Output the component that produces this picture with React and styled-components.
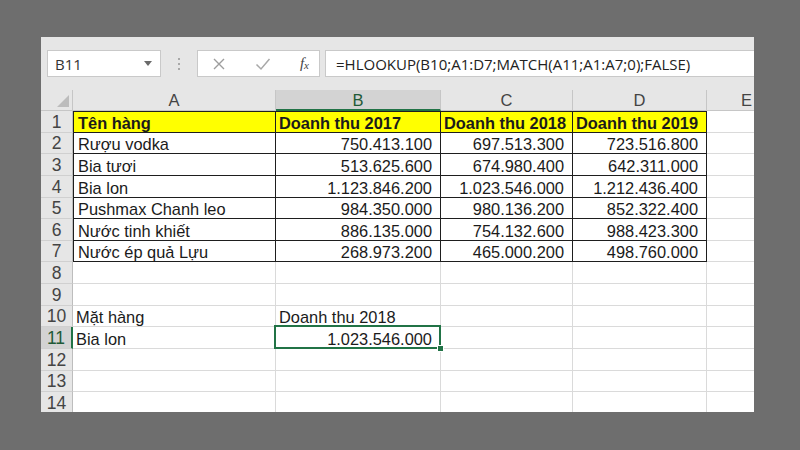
import React from "react";
import styled, { createGlobalStyle } from "styled-components";

const GlobalStyle = createGlobalStyle`
    html, body {
        margin: 0;
        padding: 0;
    }
    body {
        background: #6e6e6e;
        font-family: "Liberation Sans", Arial, sans-serif;
    }
`;

const GREEN = "#217346";

const Stage = styled.div`
    width: 800px;
    height: 450px;
    box-sizing: border-box;
    padding: 37px 46px 38px 41px;
    overflow: hidden;
`;

const Window = styled.div`
    width: 713px;
    height: 375px;
    background: #e6e6e6;
    display: flex;
    flex-direction: column;
    overflow: hidden;
`;

const FormulaBar = styled.div`
    display: flex;
    align-items: stretch;
    height: 27px;
    margin: 13px 0 13px 6px;
    flex-shrink: 0;
`;

const NameBox = styled.div`
    width: 114px;
    box-sizing: border-box;
    background: #fff;
    border: 1px solid #c9c9c9;
    display: flex;
    align-items: center;
    justify-content: space-between;
    padding: 0 8px 0 7px;
    font-family: "Open Sans", "Noto Sans", sans-serif;
    font-size: 15px;
    color: #333;
`;

const Caret = styled.span`
    width: 0;
    height: 0;
    border-left: 4px solid transparent;
    border-right: 4px solid transparent;
    border-top: 5px solid #6a6a6a;
`;

const Grip = styled.div`
    width: 36px;
    display: flex;
    flex-direction: column;
    align-items: center;
    justify-content: center;
    gap: 3px;
    span {
        width: 2px;
        height: 2px;
        background: #a8a8a8;
    }
`;

const ActionBox = styled.div`
    width: 123px;
    box-sizing: border-box;
    background: #fff;
    border: 1px solid #c9c9c9;
    display: flex;
    align-items: center;
    padding: 0 10px 0 14px;
    justify-content: space-between;
`;

const Fx = styled.i`
    font-family: "Liberation Serif", "Times New Roman", serif;
    font-size: 15px;
    color: #444;
    sub {
        font-size: 11px;
        vertical-align: -1px;
    }
`;

const FormulaInput = styled.div`
    flex: 1;
    margin-left: 5px;
    background: #fff;
    border: 1px solid #c9c9c9;
    border-right: none;
    display: flex;
    align-items: center;
    padding-left: 10px;
    font-family: "Open Sans", "Noto Sans", sans-serif;
    font-size: 15px;
    color: #222;
    white-space: nowrap;
`;

const Sheet = styled.div`
    flex: 1;
    display: grid;
    grid-template-columns: 32px 203px 165px 132px 134px 80px;
    grid-template-rows: 21px;
    grid-auto-rows: 21.65px;
    background: #fff;
    overflow: hidden;
`;

const Corner = styled.div`
    background: #e6e6e6;
    border-right: 1px solid #c6c6c6;
    border-bottom: 1px solid #c6c6c6;
    display: flex;
    align-items: flex-end;
    justify-content: flex-end;
    padding: 0 3px 3px 0;
`;

const ColHead = styled.div`
    background: ${(p) => (p.$active ? "#d3d3d3" : "#e6e6e6")};
    border-right: 1px solid #c6c6c6;
    border-bottom: ${(p) => (p.$active ? `2px solid ${GREEN}` : "1px solid #c6c6c6")};
    color: ${(p) => (p.$active ? "#1f5a37" : "#444")};
    font-size: 16.5px;
    display: flex;
    align-items: center;
    justify-content: center;
    padding-top: 1px;
    overflow: hidden;
`;

const RowHead = styled.div`
    background: ${(p) => (p.$active ? "#d3d3d3" : "#e6e6e6")};
    border-right: ${(p) => (p.$active ? `2px solid ${GREEN}` : "1px solid #bdbdbd")};
    border-bottom: 1px solid #d0d0d0;
    color: ${(p) => (p.$active ? "#1f5a37" : "#444")};
    font-size: 17.5px;
    display: flex;
    align-items: flex-end;
    justify-content: center;
    line-height: 19px;
`;

const Cell = styled.div`
    position: relative;
    box-sizing: border-box;
    background: ${(p) => (p.$fill ? "#ffff00" : "#fff")};
    border-right: 1px solid ${(p) => (p.$boxed ? "#1e1e1e" : "#dadada")};
    border-bottom: 1px solid ${(p) => (p.$boxed ? "#1e1e1e" : "#dadada")};
    border-top: ${(p) => (p.$top ? "1px solid #1e1e1e" : "none")};
    border-left: ${(p) => (p.$left ? "1px solid #1e1e1e" : "none")};
    display: flex;
    align-items: flex-end;
    justify-content: ${(p) => (p.$right ? "flex-end" : "flex-start")};
    padding: 0 8px 0 ${(p) => (p.$left ? "4px" : "3px")};
    font-size: 16.4px;
    line-height: 18px;
    font-weight: ${(p) => (p.$bold ? 700 : 400)};
    color: #1b1b1b;
    white-space: nowrap;
    z-index: ${(p) => (p.$selected ? 2 : 0)};

    ${(p) =>
        p.$selected &&
        `
        &::after {
            content: "";
            position: absolute;
            top: -2px;
            left: -2px;
            right: -1px;
            bottom: -1px;
            border: 2px solid ${GREEN};
            pointer-events: none;
        }
        &::before {
            content: "";
            position: absolute;
            right: -4px;
            bottom: -4px;
            width: 5px;
            height: 5px;
            background: ${GREEN};
            border: 1px solid #fff;
            z-index: 3;
        }
    `}
`;

const columns = ["A", "B", "C", "D", "E"];

const table = [
    ["Tên hàng", "Doanh thu 2017", "Doanh thu 2018", "Doanh thu 2019"],
    ["Rượu vodka", "750.413.100", "697.513.300", "723.516.800"],
    ["Bia tươi", "513.625.600", "674.980.400", "642.311.000"],
    ["Bia lon", "1.123.846.200", "1.023.546.000", "1.212.436.400"],
    ["Pushmax Chanh leo", "984.350.000", "980.136.200", "852.322.400"],
    ["Nước tinh khiết", "886.135.000", "754.132.600", "988.423.300"],
    ["Nước ép quả Lựu", "268.973.200", "465.000.200", "498.760.000"],
];

const rows = [
    ...table,
    [],
    [],
    ["Mặt hàng", "Doanh thu 2018"],
    ["Bia lon", "1.023.546.000"],
    [],
    [],
    [],
];

const isNumber = (v) => /^[\d.]+$/.test(v);

const Cross = () => (
    <svg width="14" height="14" viewBox="0 0 14 14">
        <path d="M2 2 L12 12 M12 2 L2 12" stroke="#9d9d9d" strokeWidth="1.4" fill="none" />
    </svg>
);

const Check = () => (
    <svg width="16" height="14" viewBox="0 0 16 14">
        <path d="M1.5 7.5 L6 12 L14.5 2" stroke="#a8a8a8" strokeWidth="1.5" fill="none" />
    </svg>
);

const App = () => {
    return (
        <Stage>
            <GlobalStyle />
            <Window>
                <FormulaBar>
                    <NameBox>
                        B11
                        <Caret />
                    </NameBox>
                    <Grip>
                        <span />
                        <span />
                        <span />
                    </Grip>
                    <ActionBox>
                        <Cross />
                        <Check />
                        <Fx>
                            f<sub>x</sub>
                        </Fx>
                    </ActionBox>
                    <FormulaInput>=HLOOKUP(B10;A1:D7;MATCH(A11;A1:A7;0);FALSE)</FormulaInput>
                </FormulaBar>
                <Sheet>
                    <Corner>
                        <svg width="12" height="12" viewBox="0 0 12 12">
                            <path d="M12 0 L12 12 L0 12 Z" fill="#bcbcbc" />
                        </svg>
                    </Corner>
                    {columns.map((c) => (
                        <ColHead key={c} $active={c === "B"}>
                            {c}
                        </ColHead>
                    ))}
                    {rows.map((row, r) => {
                        const n = r + 1;
                        const inTable = n <= 7;
                        return (
                            <React.Fragment key={n}>
                                <RowHead $active={n === 11}>{n}</RowHead>
                                {columns.map((c, ci) => {
                                    const v = row[ci] || "";
                                    const boxed = inTable && ci < 4;
                                    return (
                                        <Cell
                                            key={c}
                                            $boxed={boxed}
                                            $top={boxed && n === 1}
                                            $left={boxed && ci === 0}
                                            $fill={boxed && n === 1}
                                            $bold={boxed && n === 1}
                                            $right={isNumber(v)}
                                            $selected={n === 11 && c === "B"}
                                        >
                                            {v}
                                        </Cell>
                                    );
                                })}
                            </React.Fragment>
                        );
                    })}
                </Sheet>
            </Window>
        </Stage>
    );
};

export default App;
